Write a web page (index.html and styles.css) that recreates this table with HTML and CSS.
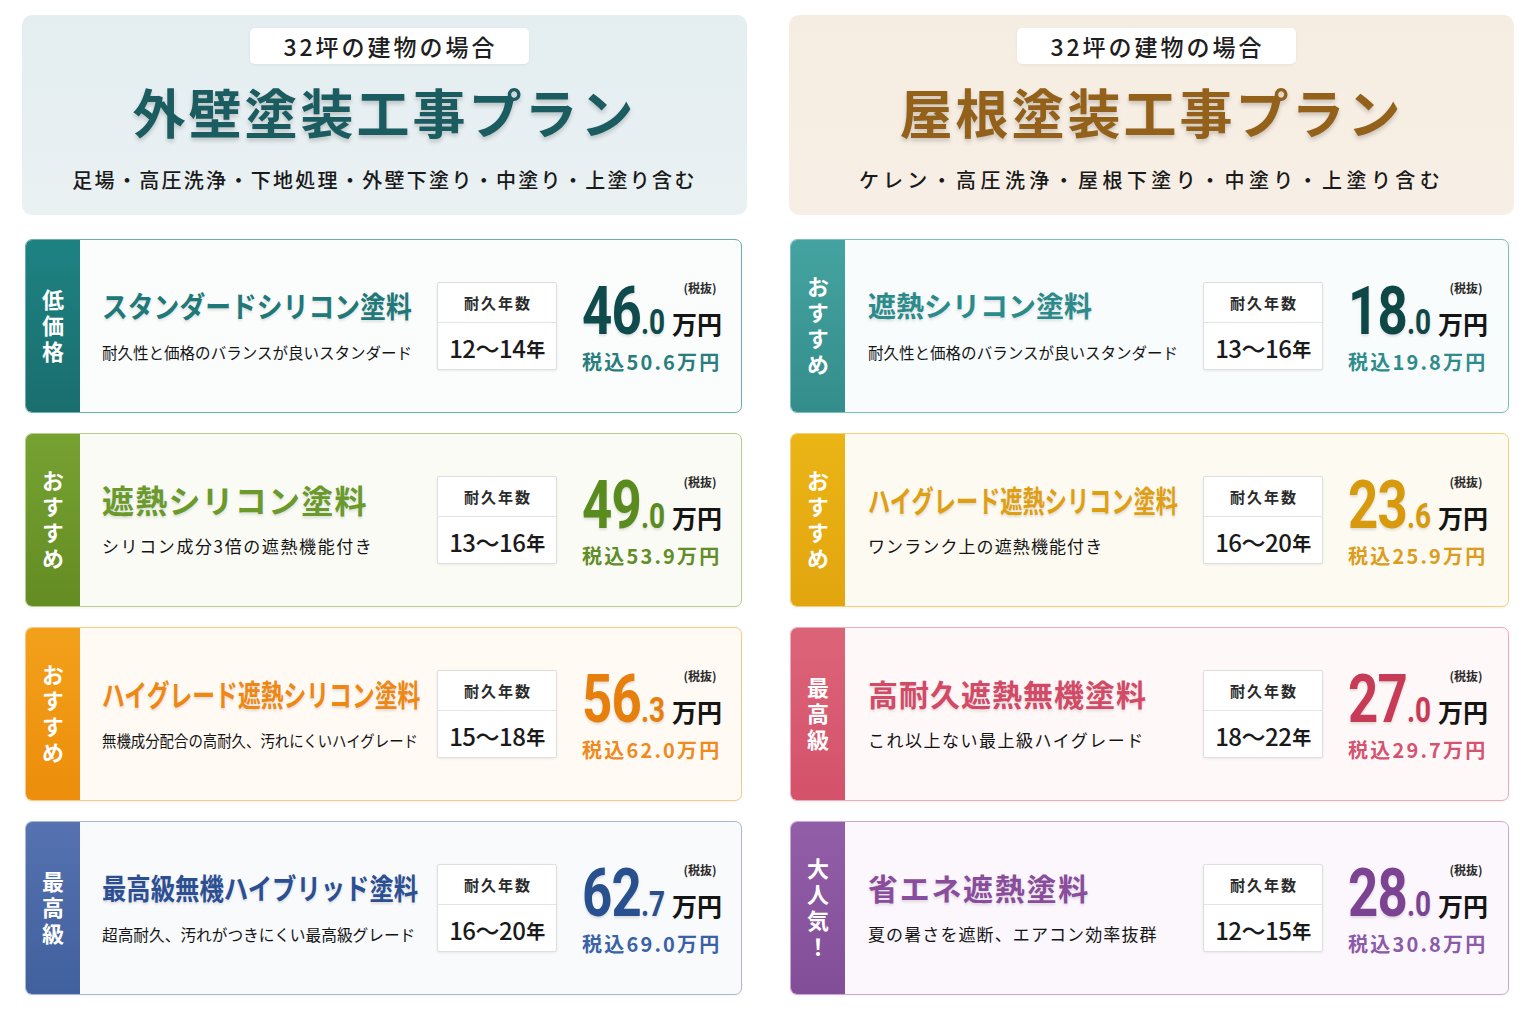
FILE: index.html
```html
<!DOCTYPE html>
<html lang="ja">
<head>
<meta charset="utf-8">
<title>塗装工事プラン</title>
<link rel="stylesheet" href="styles.css">
</head>
<body>
<main class="page">
  <section class="col">
    <header class="plan plan--wall">
      <div class="pill">32坪の建物の場合</div>
      <h1 class="plan-title">外壁塗装工事プラン</h1>
      <p class="plan-sub">足場・高圧洗浄・下地処理・外壁下塗り・中塗り・上塗り含む</p>
    </header>
    <div class="cards">
      <article class="card th-teal">
        <div class="tag"><span>低価格</span></div>
        <div class="info">
          <h2 class="name t-a">スタンダードシリコン塗料</h2>
          <p class="desc d-a">耐久性と価格のバランスが良いスタンダード</p>
        </div>
        <div class="dur"><div class="dur-h">耐久年数</div><div class="dur-v">12〜14<small>年</small></div></div>
        <div class="price">
          <div class="price-main"><span class="num">46<span class="dec">.0</span></span><span class="unit-col"><span class="note">(税抜)</span><span class="unit">万円</span></span></div>
          <div class="taxin">税込50.6万円</div>
        </div>
      </article>
      <article class="card th-green">
        <div class="tag"><span>おすすめ</span></div>
        <div class="info">
          <h2 class="name t-b">遮熱シリコン塗料</h2>
          <p class="desc d-b">シリコン成分3倍の遮熱機能付き</p>
        </div>
        <div class="dur"><div class="dur-h">耐久年数</div><div class="dur-v">13〜16<small>年</small></div></div>
        <div class="price">
          <div class="price-main"><span class="num">49<span class="dec">.0</span></span><span class="unit-col"><span class="note">(税抜)</span><span class="unit">万円</span></span></div>
          <div class="taxin">税込53.9万円</div>
        </div>
      </article>
      <article class="card th-orange">
        <div class="tag"><span>おすすめ</span></div>
        <div class="info">
          <h2 class="name t-c">ハイグレード遮熱シリコン塗料</h2>
          <p class="desc d-c">無機成分配合の高耐久、汚れにくいハイグレード</p>
        </div>
        <div class="dur"><div class="dur-h">耐久年数</div><div class="dur-v">15〜18<small>年</small></div></div>
        <div class="price">
          <div class="price-main"><span class="num">56<span class="dec">.3</span></span><span class="unit-col"><span class="note">(税抜)</span><span class="unit">万円</span></span></div>
          <div class="taxin">税込62.0万円</div>
        </div>
      </article>
      <article class="card th-blue">
        <div class="tag"><span>最高級</span></div>
        <div class="info">
          <h2 class="name t-d">最高級無機ハイブリッド塗料</h2>
          <p class="desc d-d">超高耐久、汚れがつきにくい最高級グレード</p>
        </div>
        <div class="dur"><div class="dur-h">耐久年数</div><div class="dur-v">16〜20<small>年</small></div></div>
        <div class="price">
          <div class="price-main"><span class="num">62<span class="dec">.7</span></span><span class="unit-col"><span class="note">(税抜)</span><span class="unit">万円</span></span></div>
          <div class="taxin">税込69.0万円</div>
        </div>
      </article>
    </div>
  </section>

  <section class="col">
    <header class="plan plan--roof">
      <div class="pill">32坪の建物の場合</div>
      <h1 class="plan-title">屋根塗装工事プラン</h1>
      <p class="plan-sub plan-sub--wide">ケレン・高圧洗浄・屋根下塗り・中塗り・上塗り含む</p>
    </header>
    <div class="cards cards--r">
      <article class="card th-teal2">
        <div class="tag"><span>おすすめ</span></div>
        <div class="info">
          <h2 class="name t-e">遮熱シリコン塗料</h2>
          <p class="desc d-a">耐久性と価格のバランスが良いスタンダード</p>
        </div>
        <div class="dur"><div class="dur-h">耐久年数</div><div class="dur-v">13〜16<small>年</small></div></div>
        <div class="price">
          <div class="price-main"><span class="num">18<span class="dec">.0</span></span><span class="unit-col"><span class="note">(税抜)</span><span class="unit">万円</span></span></div>
          <div class="taxin">税込19.8万円</div>
        </div>
      </article>
      <article class="card th-gold">
        <div class="tag"><span>おすすめ</span></div>
        <div class="info">
          <h2 class="name t-c2">ハイグレード遮熱シリコン塗料</h2>
          <p class="desc d-e">ワンランク上の遮熱機能付き</p>
        </div>
        <div class="dur"><div class="dur-h">耐久年数</div><div class="dur-v">16〜20<small>年</small></div></div>
        <div class="price">
          <div class="price-main"><span class="num">23<span class="dec">.6</span></span><span class="unit-col"><span class="note">(税抜)</span><span class="unit">万円</span></span></div>
          <div class="taxin">税込25.9万円</div>
        </div>
      </article>
      <article class="card th-pink">
        <div class="tag"><span>最高級</span></div>
        <div class="info">
          <h2 class="name t-f">高耐久遮熱無機塗料</h2>
          <p class="desc d-f">これ以上ない最上級ハイグレード</p>
        </div>
        <div class="dur"><div class="dur-h">耐久年数</div><div class="dur-v">18〜22<small>年</small></div></div>
        <div class="price">
          <div class="price-main"><span class="num">27<span class="dec">.0</span></span><span class="unit-col"><span class="note">(税抜)</span><span class="unit">万円</span></span></div>
          <div class="taxin">税込29.7万円</div>
        </div>
      </article>
      <article class="card th-purple">
        <div class="tag"><span>大人気！</span></div>
        <div class="info">
          <h2 class="name t-g">省エネ遮熱塗料</h2>
          <p class="desc d-e">夏の暑さを遮断、エアコン効率抜群</p>
        </div>
        <div class="dur"><div class="dur-h">耐久年数</div><div class="dur-v">12〜15<small>年</small></div></div>
        <div class="price">
          <div class="price-main"><span class="num">28<span class="dec">.0</span></span><span class="unit-col"><span class="note">(税抜)</span><span class="unit">万円</span></span></div>
          <div class="taxin">税込30.8万円</div>
        </div>
      </article>
    </div>
  </section>
</main>
</body>
</html>
```

FILE: styles.css
```css
* { box-sizing: border-box; }
html, body { margin: 0; padding: 0; }
body {
  background: #ffffff;
  font-family: "Noto Sans CJK JP", "Noto Sans", sans-serif;
  color: #222;
  width: 1536px;
  height: 1024px;
  overflow: hidden;
}
h1, h2, p { margin: 0; }

.page {
  display: grid;
  grid-template-columns: 725px 725px;
  column-gap: 42px;
  padding: 15px 22px 0;
}

/* ---------- header ---------- */
.plan {
  height: 200px;
  border-radius: 10px;
  display: flex;
  flex-direction: column;
  align-items: center;
  padding-top: 13px;
}
.plan--wall { background: linear-gradient(180deg, #e4edf0 0%, #e9f1f3 100%); }
.plan--roof { background: linear-gradient(180deg, #f6ede2 0%, #f7efe5 100%); }

.pill {
  height: 36px;
  padding: 0 31px 0 33px;
  background: #fff;
  border-radius: 5px;
  box-shadow: 0 1px 3px rgba(0,0,0,.06);
  font-size: 23px;
  line-height: 36px;
  letter-spacing: 3px;
  color: #1e1e1e;
  font-weight: 500;
  margin-left: 10px;
}
.plan-title {
  margin-top: 17px;
  height: 60px;
  font-size: 53px;
  line-height: 60px;
  font-weight: 700;
  letter-spacing: 3px;
  text-shadow: 0 3px 4px rgba(0,0,0,.18);
}
.plan--wall .plan-title { color: #1b5c60; }
.plan--roof .plan-title { color: #93611a; }
.plan-sub {
  margin-top: 25px;
  font-size: 20px;
  line-height: 28px;
  letter-spacing: 2.3px;
  color: #1a1a1a;
  font-weight: 500;
}
.plan-sub--wide { letter-spacing: 4.4px; }

/* ---------- cards ---------- */
.cards {
  margin-top: 24px;
  display: flex;
  flex-direction: column;
  gap: 20px;
  padding: 0 5px 0 3px;
}
.cards--r { padding-left: 1px; }

.card {
  height: 174px;
  display: flex;
  align-items: center;
  border: 1px solid var(--border);
  border-radius: 7px;
  background: var(--bg);
  overflow: hidden;
  box-shadow: 0 1px 3px rgba(0,0,0,.05);
}
.tag {
  align-self: stretch;
  width: 54px;
  flex: none;
  background: linear-gradient(180deg, var(--tag) 0%, var(--tag2) 100%);
  display: flex;
  align-items: center;
  justify-content: center;
}
.tag span {
  writing-mode: vertical-rl;
  color: #fff;
  font-size: 22px;
  font-weight: 700;
  letter-spacing: 4px;
  line-height: 1;
  margin-top: 4px;
}
.info {
  flex: none;
  width: 335px;
  margin-left: 22px;
  display: flex;
  flex-direction: column;
  align-items: flex-start;
  gap: 17px;
  padding-bottom: 2px;
}
.cards--r .info { margin-left: 23px; }
.name {
  color: var(--main);
  font-weight: 700;
  line-height: 36px;
  height: 36px;
  white-space: nowrap;
  transform-origin: left center;
  text-shadow: 0 2px 3px rgba(0,0,0,.12);
}
.t-a  { font-size: 29px; transform: scaleX(.89); }
.t-b  { font-size: 32px; letter-spacing: 1.2px; }
.t-c  { font-size: 30px; transform: scaleX(.76); }
.t-c2 { font-size: 30px; transform: scaleX(.74); }
.t-d  { font-size: 29px; transform: scaleX(.84); }
.t-e  { font-size: 28px; }
.t-f  { font-size: 30px; letter-spacing: 1px; }
.t-g  { font-size: 30px; letter-spacing: 1.7px; }

.desc {
  font-size: 16px;
  line-height: 24px;
  color: #141414;
  white-space: nowrap;
  transform-origin: left center;
}
.d-a { font-size: 16px; transform: scaleX(.97); }
.d-b { font-size: 17px; letter-spacing: 1.6px; }
.d-c { font-size: 16px; transform: scaleX(.9); }
.d-d { font-size: 16px; transform: scaleX(.98); }
.d-e { font-size: 17px; letter-spacing: 1.1px; }
.d-f { font-size: 17px; letter-spacing: 1.5px; }

/* durability box */
.dur {
  flex: none;
  width: 120px;
  height: 88px;
  border: 1px solid #dedede;
  border-radius: 2px;
  background: #fff;
  box-shadow: 0 1px 3px rgba(0,0,0,.07);
  display: flex;
  flex-direction: column;
}
.dur-h {
  height: 40px;
  border-bottom: 1px solid #e3e3e3;
  display: flex;
  align-items: center;
  justify-content: center;
  font-size: 15px;
  font-weight: 700;
  letter-spacing: 2px;
  color: #2a2a2a;
  padding-left: 2px;
}
.dur-v {
  flex: 1;
  display: flex;
  align-items: center;
  justify-content: center;
  font-size: 24px;
  font-weight: 500;
  color: #1a1a1a;
  letter-spacing: -0.5px;
  padding-top: 2px;
}
.dur-v small {
  font-size: 19px;
  font-weight: 700;
  margin-left: 1px;
  margin-top: 3px;
}

/* price */
.price {
  flex: none;
  width: 140px;
  margin-left: 25px;
  display: flex;
  flex-direction: column;
}
.price-main {
  display: flex;
  align-items: flex-end;
  height: 66px;
}
.num {
  display: inline-block;
  font-family: Roboto, "Liberation Sans", sans-serif;
  font-size: 66px;
  line-height: 1;
  font-weight: 700;
  color: var(--num);
  transform: scaleX(0.8);
  transform-origin: left center;
  margin-right: -14px;
  letter-spacing: -1px;
  white-space: nowrap;
  text-shadow: 0 2px 3px rgba(0,0,0,.12);
}
.dec {
  font-size: 35px;
  letter-spacing: 0;
}
.unit-col {
  display: flex;
  flex-direction: column;
  align-items: center;
  padding-bottom: 9px;
}
.note {
  font-size: 12px;
  font-weight: 700;
  line-height: 14px;
  color: #2a2a2a;
  margin-bottom: 16px;
  margin-left: 6px;
}
.unit {
  font-size: 25px;
  line-height: 25px;
  font-weight: 700;
  color: #151515;
}
.taxin {
  margin-top: 5px;
  font-size: 20px;
  line-height: 24px;
  font-weight: 700;
  letter-spacing: 2.2px;
  color: var(--sub);
  white-space: nowrap;
}

/* themes */
.th-teal   { --main:#207878; --tag:#1e8282; --tag2:#1a6e6e; --num:#0f4b4c; --sub:#2a7d7d; --border:#6aaeae; --bg:#fbfdfd; }
.th-green  { --main:#6a9a2c; --tag:#76a232; --tag2:#638c22; --num:#5a8b1f; --sub:#5f8d27; --border:#b8cc8c; --bg:#fbfbf6; }
.th-orange { --main:#ef8712; --tag:#f3a11a; --tag2:#ec8d0c; --num:#e67f0c; --sub:#ef8a20; --border:#f5cb85; --bg:#fffaf4; }
.th-blue   { --main:#2c4f94; --tag:#5672b0; --tag2:#41609e; --num:#28508f; --sub:#3a62a6; --border:#aab7d2; --bg:#f9fafc; }
.th-teal2  { --main:#2b8b8b; --tag:#44a3a0; --tag2:#338d8b; --num:#0f4646; --sub:#2f8c8c; --border:#80bcbc; --bg:#f9fcfc; }
.th-gold   { --main:#e09e12; --tag:#ebb516; --tag2:#e2a50e; --num:#d8990c; --sub:#dc9c20; --border:#f0d27a; --bg:#fdfaf1; }
.th-pink   { --main:#d34a66; --tag:#dc6479; --tag2:#d4526a; --num:#c83b57; --sub:#d45470; --border:#f0aab8; --bg:#fff8f9; }
.th-purple { --main:#8a4c9c; --tag:#925ea8; --tag2:#824e98; --num:#7b4392; --sub:#8c5aa6; --border:#c9a8d6; --bg:#fbf7fc; }
```
